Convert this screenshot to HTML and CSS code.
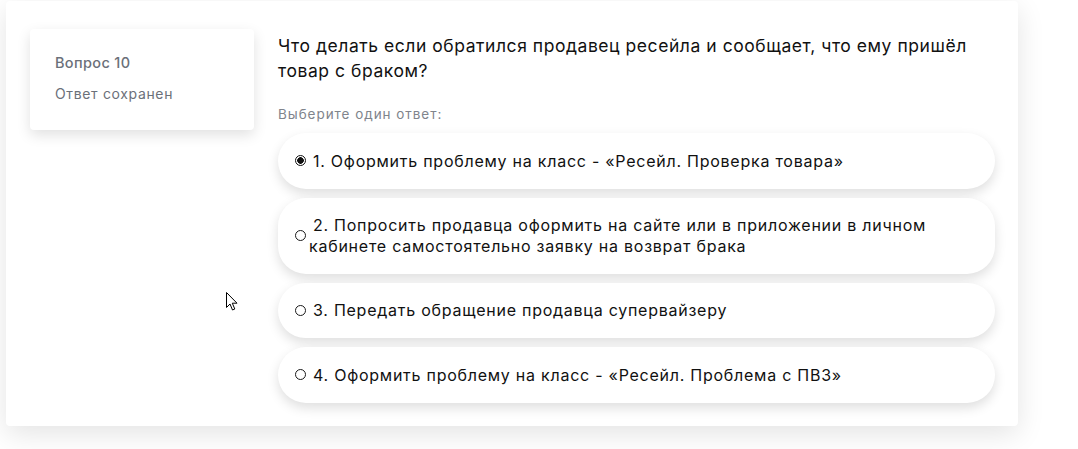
FILE: index.html
```html
<!DOCTYPE html>
<html lang="ru">
<head>
<meta charset="utf-8">
<title>Вопрос 10</title>
<link rel="stylesheet" href="styles.css">
</head>
<body>
<div class="card">
  <div class="info">
    <div class="info-no">Вопрос 10</div>
    <div class="info-state">Ответ сохранен</div>
  </div>
  <div class="content">
    <div class="qtext">Что делать если обратился продавец ресейла и сообщает, что ему пришёл товар с браком?</div>
    <div class="prompt">Выберите один ответ:</div>
    <div class="answers">
      <div class="answer">
        <span class="radio checked"></span>
        <span class="label">1. Оформить проблему на класс - «Ресейл. Проверка товара»</span>
      </div>
      <div class="answer">
        <span class="radio"></span>
        <span class="label">2. Попросить продавца оформить на сайте или в приложении в личном кабинете самостоятельно заявку на возврат брака</span>
      </div>
      <div class="answer">
        <span class="radio"></span>
        <span class="label">3. Передать обращение продавца супервайзеру</span>
      </div>
      <div class="answer">
        <span class="radio"></span>
        <span class="label">4. Оформить проблему на класс - «Ресейл. Проблема с ПВЗ»</span>
      </div>
    </div>
  </div>
</div>
<svg class="cursor" width="13" height="20" viewBox="0 0 13 20" xmlns="http://www.w3.org/2000/svg">
  <path d="M0.5 0.5 L0.5 15.5 L4 12 L6.5 18 L8.8 17 L6.3 11.2 L11 11.2 Z" fill="#fff" stroke="#000" stroke-width="1" stroke-linejoin="miter"/>
</svg>
</body>
</html>
```

FILE: styles.css
```css
html, body {
  margin: 0;
  padding: 0;
  background: #fff;
}
body {
  position: relative;
  width: 1078px;
  height: 449px;
  overflow: hidden;
  font-family: Inter, "Noto Sans", sans-serif;
  color: #111;
}
.card {
  margin: 1px 0 0 6px;
  width: 1012px;
  box-sizing: border-box;
  padding: 28px 23px 23px 24px;
  background: #fff;
  border-radius: 4px;
  box-shadow: 0 8px 28px rgba(0, 0, 0, 0.11);
  display: flex;
  align-items: flex-start;
  gap: 24px;
}
.info {
  flex: 0 0 224px;
  box-sizing: border-box;
  height: 101px;
  padding: 24px 10px 0 25px;
  background: #fff;
  border-radius: 4px;
  box-shadow: 0 5px 14px rgba(0, 0, 0, 0.12);
  display: flex;
  flex-direction: column;
  gap: 11px;
}
.info-no {
  font-size: 14.5px;
  line-height: 20px;
  font-weight: 500;
  letter-spacing: 0.35px;
  color: #6b7079;
}
.info-state {
  font-size: 14px;
  line-height: 20px;
  letter-spacing: 0.65px;
  color: #6b7079;
}
.content {
  flex: 1;
  min-width: 0;
  padding-top: 4px;
}
.qtext {
  font-size: 17.5px;
  line-height: 25px;
  letter-spacing: 0.55px;
  color: #111;
}
.prompt {
  margin-top: 22px;
  font-size: 13.5px;
  line-height: 18px;
  letter-spacing: 0.95px;
  color: #80848c;
}
.answers {
  margin-top: 10px;
  display: flex;
  flex-direction: column;
  gap: 9px;
}
.answer {
  display: flex;
  align-items: center;
  padding: 17.5px 17px;
  background: #fff;
  border-radius: 28px;
  box-shadow: 0 5px 12px rgba(0, 0, 0, 0.13);
  font-size: 16px;
  line-height: 20.5px;
  letter-spacing: 0.75px;
}
.radio {
  flex: 0 0 auto;
  width: 11px;
  height: 11px;
  box-sizing: border-box;
  border: 1.2px solid #1a1a1a;
  border-radius: 50%;
  margin-right: 3px;
  background: #fff;
}
.radio.checked {
  border: 1.5px solid #111;
  background: radial-gradient(circle, #111 0 3px, #fff 3.6px);
}
.label {
  flex: 1;
  text-indent: 4px;
}
.cursor {
  position: absolute;
  left: 226px;
  top: 292px;
}
```
